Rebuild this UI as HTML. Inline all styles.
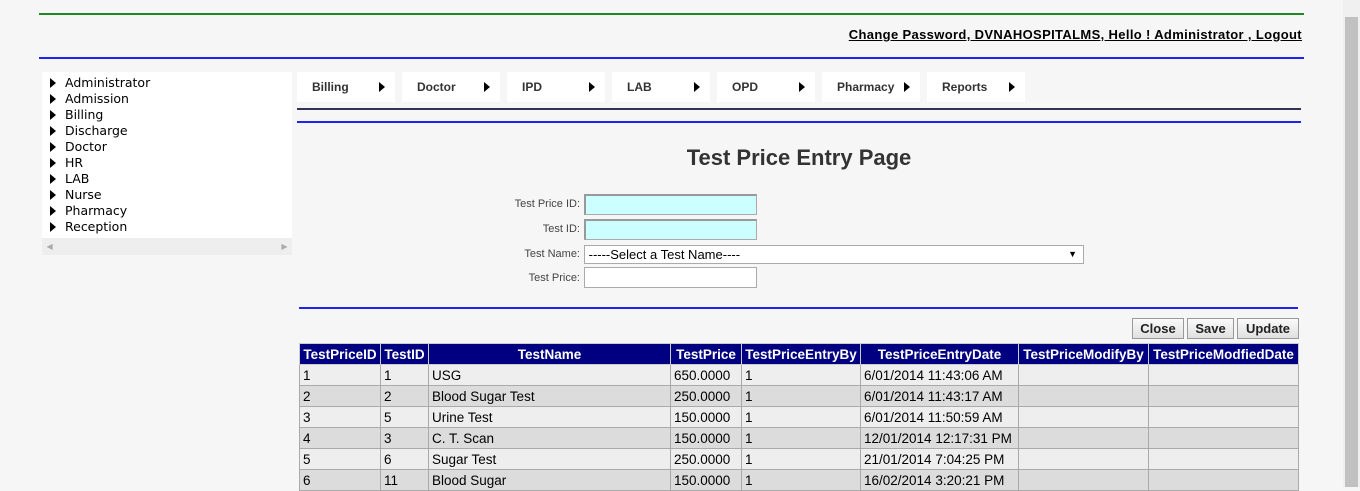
<!DOCTYPE html><html><head><style>
body{margin:0;width:1360px;height:487px;background:#f6f6f6;font-family:"Liberation Sans",Arial,sans-serif;position:relative;overflow:hidden}
.a{position:absolute}
.menu div{height:16px;line-height:16px;font-family:"DejaVu Sans",sans-serif;font-size:12.5px;color:#000}
.menu span{display:inline-block;width:0;height:0;border-left:6px solid #000;border-top:5px solid transparent;border-bottom:5px solid transparent;margin:0 9px 0 8px;vertical-align:-1px}
.nav{top:72px;height:30px;width:98px;background:#fff;font-size:12px;font-weight:bold;line-height:30px;color:#333}
.nav b{position:absolute;left:82px;top:10px;width:0;height:0;border-left:6px solid #000;border-top:5px solid transparent;border-bottom:5px solid transparent}
.nav i{font-style:normal;margin-left:15px}
.lbl{font-size:11px;color:#444;text-align:right;width:200px;left:380px}
.in{left:584px;width:171px;height:19px;border:1px solid #aaa;background:#fff}
.cy{background:#ccffff;border-top:2px solid #999;border-left:2px solid #999;height:18px;width:170px}
table{border-collapse:collapse;font-size:13.5px}
td,th{border:1px solid #aaa;padding:0 3px;height:20px;white-space:nowrap}
th{background:#000080;color:#fff;border-color:#ccc;font-weight:bold}
tr:nth-child(even) td{background:#eeeeee}tr:nth-child(odd) td{background:#dcdcdc}
.btn{top:318px;height:19px;border:1px solid #999;background:linear-gradient(#fafafa,#e0e0e0);font-size:13px;font-weight:bold;text-align:center;line-height:19px;color:#222}
</style></head><body>
<div class="a" style="left:39px;top:13px;width:1265px;height:2px;background:#228822"></div>
<div class="a" style="right:58px;top:27px;font-size:13px;letter-spacing:0.35px;font-weight:bold;text-decoration:underline;color:#000">Change Password, DVNAHOSPITALMS, Hello ! Administrator , Logout</div>
<div class="a" style="left:39px;top:57px;width:1265px;height:2px;background:#2222ee"></div>
<div class="a" style="left:1343px;top:0;width:17px;height:487px;background:#f0f0f0"></div>
<div class="a" style="left:1345px;top:17px;width:13px;height:470px;background:#c1c1c1"></div>
<div class="a menu" style="left:42px;top:72px;width:250px;height:166px;background:#fff;padding-top:3px;box-sizing:border-box">
<div><span></span>Administrator</div><div><span></span>Admission</div><div><span></span>Billing</div><div><span></span>Discharge</div><div><span></span>Doctor</div><div><span></span>HR</div><div><span></span>LAB</div><div><span></span>Nurse</div><div><span></span>Pharmacy</div><div><span></span>Reception</div></div>
<div class="a" style="left:42px;top:238px;width:250px;height:17px;background:#eee;color:#aaa;font-size:8px;line-height:17px">&nbsp;&nbsp;◀<span style="float:right">▶&nbsp;&nbsp;</span></div>
<div class="a nav" style="left:297px"><i>Billing</i><b></b></div>
<div class="a nav" style="left:402px"><i>Doctor</i><b></b></div>
<div class="a nav" style="left:507px"><i>IPD</i><b></b></div>
<div class="a nav" style="left:612px"><i>LAB</i><b></b></div>
<div class="a nav" style="left:717px"><i>OPD</i><b></b></div>
<div class="a nav" style="left:822px"><i>Pharmacy</i><b></b></div>
<div class="a nav" style="left:927px"><i>Reports</i><b></b></div>
<div class="a" style="left:297px;top:108px;width:1004px;height:2px;background:#333355"></div>
<div class="a" style="left:297px;top:121px;width:1004px;height:2px;background:#2222ee"></div>
<div class="a" style="left:297px;top:145px;width:1004px;text-align:center;font-size:22px;font-weight:bold;color:#333">Test Price Entry Page</div>
<div class="a lbl" style="top:198px">Test Price ID:</div>
<div class="a in cy" style="top:194px"></div>
<div class="a lbl" style="top:223px">Test ID:</div>
<div class="a in cy" style="top:219px"></div>
<div class="a lbl" style="top:248px">Test Name:</div>
<div class="a in" style="top:245px;width:498px;height:17px;font-size:13px;line-height:17px">&nbsp;-----Select a Test Name----<span style="float:right;font-size:9px;margin-right:6px">▼</span></div>
<div class="a lbl" style="top:272px">Test Price:</div>
<div class="a in" style="top:267px"></div>
<div class="a" style="left:299px;top:307px;width:999px;height:2px;background:#2222ee"></div>
<div class="a btn" style="left:1132px;width:50px">Close</div>
<div class="a btn" style="left:1187px;width:45px">Save</div>
<div class="a btn" style="left:1237px;width:60px">Update</div>
<table class="a" style="left:299px;top:343px;width:1000px">
<tr><th style="width:74px">TestPriceID</th><th style="width:41px">TestID</th><th style="width:235px">TestName</th><th style="width:64px">TestPrice</th><th style="width:112px">TestPriceEntryBy</th><th style="width:151px">TestPriceEntryDate</th><th style="width:123px">TestPriceModifyBy</th><th>TestPriceModfiedDate</th></tr>
<tr><td>1</td><td>1</td><td>USG</td><td>650.0000</td><td>1</td><td>6/01/2014 11:43:06 AM</td><td></td><td></td></tr>
<tr><td>2</td><td>2</td><td>Blood Sugar Test</td><td>250.0000</td><td>1</td><td>6/01/2014 11:43:17 AM</td><td></td><td></td></tr>
<tr><td>3</td><td>5</td><td>Urine Test</td><td>150.0000</td><td>1</td><td>6/01/2014 11:50:59 AM</td><td></td><td></td></tr>
<tr><td>4</td><td>3</td><td>C. T. Scan</td><td>150.0000</td><td>1</td><td>12/01/2014 12:17:31 PM</td><td></td><td></td></tr>
<tr><td>5</td><td>6</td><td>Sugar Test</td><td>250.0000</td><td>1</td><td>21/01/2014 7:04:25 PM</td><td></td><td></td></tr>
<tr><td>6</td><td>11</td><td>Blood Sugar</td><td>150.0000</td><td>1</td><td>16/02/2014 3:20:21 PM</td><td></td><td></td></tr>
</table>
</body></html>
